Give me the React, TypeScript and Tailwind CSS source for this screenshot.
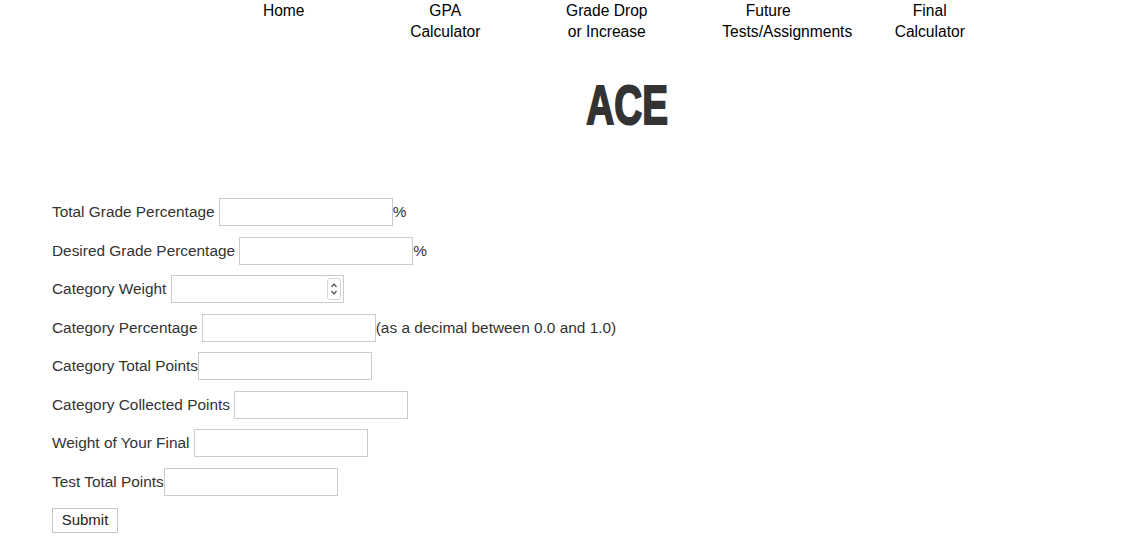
import React from "react";

const navItems: string[] = [
  "Home",
  "GPA Calculator",
  "Grade Drop or Increase",
  "Future Tests/Assignments",
  "Final Calculator",
];

function TextInput() {
  return (
    <input
      type="text"
      className="h-[28px] w-[174px] border border-[#cccccc] bg-white px-1 outline-none"
    />
  );
}

function Row({ children }: { children: React.ReactNode }) {
  return <div className="flex h-[28px] items-center whitespace-pre">{children}</div>;
}

export default function App() {
  return (
    <div
      className="min-h-[553px] w-full bg-white text-black"
      style={{ fontFamily: '"Liberation Sans", Arial, sans-serif' }}
    >
      <nav className="flex pl-[203px]">
        {navItems.map((item) => (
          <div key={item} className="flex w-[161.5px] justify-center">
            <div className="w-[92px] text-center text-[15.6px] leading-[21px]">{item}</div>
          </div>
        ))}
      </nav>

      <div className="mt-[35px] flex justify-center pl-[128px]">
        <div className="inline-block scale-x-[0.69] text-[56px] font-bold leading-[56px] text-[#333333] [-webkit-text-stroke:2px_#333333]">
          ACE
        </div>
      </div>

      <form
        className="mt-[65px] flex flex-col gap-[10.5px] pl-[52px] text-[15.4px] text-[#333333]"
        onSubmit={(e) => e.preventDefault()}
      >
        <Row>
          Total Grade Percentage <TextInput />%
        </Row>
        <Row>
          Desired Grade Percentage <TextInput />%
        </Row>
        <Row>
          Category Weight{" "}
          <div className="relative">
            <input
              type="text"
              className="h-[28px] w-[173px] border border-[#cccccc] bg-white px-1 outline-none"
            />
            <div className="absolute right-[3px] top-[3px] flex h-[22px] w-[14px] flex-col items-center justify-center rounded-[3px] border border-[#d6d6d6] bg-white">
              <svg width="8" height="18" viewBox="0 0 8 18" fill="none" stroke="#555" strokeWidth="1.3">
                <path d="M1.5 7 L4 4 L6.5 7" />
                <path d="M1.5 11 L4 14 L6.5 11" />
              </svg>
            </div>
          </div>
        </Row>
        <Row>
          Category Percentage <TextInput />(as a decimal between 0.0 and 1.0)
        </Row>
        <Row>
          Category Total Points<TextInput />
        </Row>
        <Row>
          Category Collected Points <TextInput />
        </Row>
        <Row>
          Weight of Your Final <TextInput />
        </Row>
        <Row>
          Test Total Points<TextInput />
        </Row>
        <div className="flex h-[28px] items-center">
          <button
            type="submit"
            className="h-[25px] w-[66px] border border-[#c8c8c8] bg-white text-[15px] text-[#222222]"
          >
            Submit
          </button>
        </div>
      </form>
    </div>
  );
}
